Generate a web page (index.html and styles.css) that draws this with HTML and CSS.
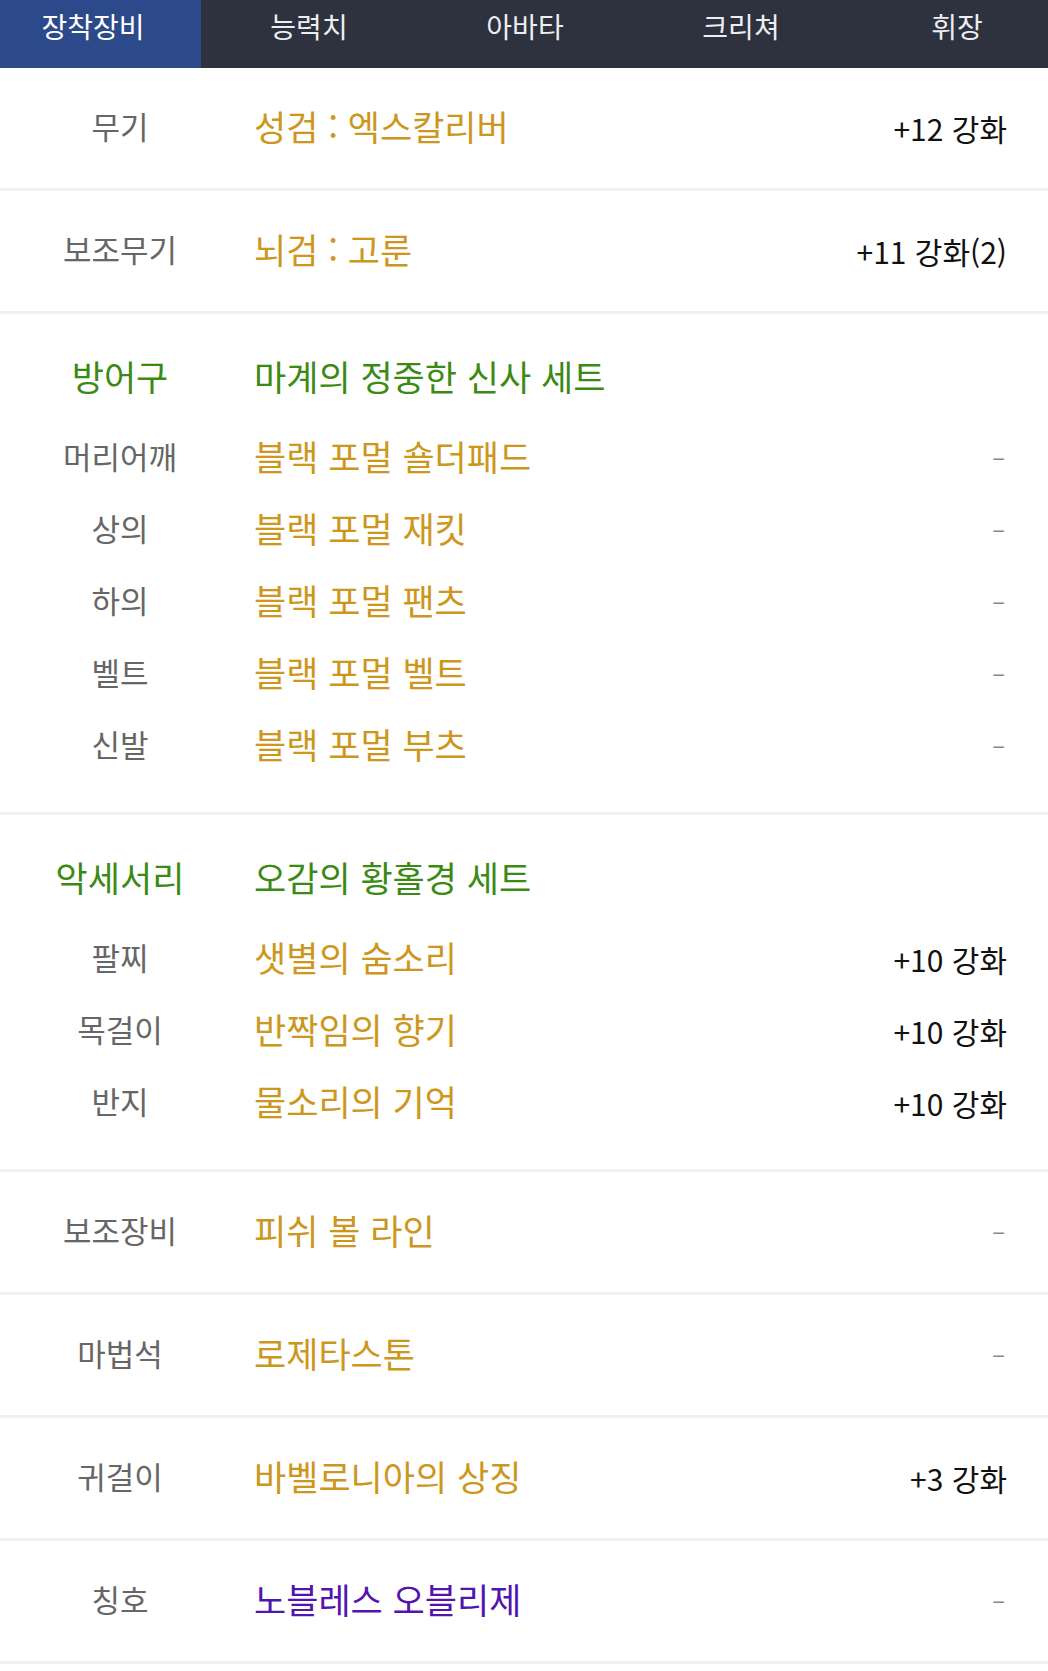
FILE: index.html
```html
<!DOCTYPE html>
<html lang="ko">
<head>
	<meta charset="UTF-8">
	<title>장착장비</title>
	<link rel="stylesheet" href="styles.css">
</head>
<body>
	<nav class="tabs">
		<ul class="tab-strip">
			<li class="tab active">장착장비</li>
			<li class="tab">능력치</li>
			<li class="tab">아바타</li>
			<li class="tab">크리쳐</li>
			<li class="tab">휘장</li>
		</ul>
	</nav>

	<div class="equip-list">
		<div class="slot">
			<div class="row">
				<span class="label">무기</span>
				<span class="name">성검 : 엑스칼리버</span>
				<span class="grade">+12 강화</span>
			</div>
		</div>

		<div class="slot">
			<div class="row">
				<span class="label">보조무기</span>
				<span class="name">뇌검 : 고룬</span>
				<span class="grade">+11 강화(2)</span>
			</div>
		</div>

		<!-- 세트 장비 -->
		<div class="slot set">
			<div class="row set-title">
				<span class="label">방어구</span>
				<span class="name">마계의 정중한 신사 세트</span>
			</div>
			<div class="row sub">
				<span class="label">머리어깨</span>
				<span class="name">블랙 포멀 숄더패드</span>
				<span class="grade none">–</span>
			</div>
			<div class="row sub">
				<span class="label">상의</span>
				<span class="name">블랙 포멀 재킷</span>
				<span class="grade none">–</span>
			</div>
			<div class="row sub">
				<span class="label">하의</span>
				<span class="name">블랙 포멀 팬츠</span>
				<span class="grade none">–</span>
			</div>
			<div class="row sub">
				<span class="label">벨트</span>
				<span class="name">블랙 포멀 벨트</span>
				<span class="grade none">–</span>
			</div>
			<div class="row sub">
				<span class="label">신발</span>
				<span class="name">블랙 포멀 부츠</span>
				<span class="grade none">–</span>
			</div>
		</div>

		<div class="slot set">
			<div class="row set-title">
				<span class="label">악세서리</span>
				<span class="name">오감의 황홀경 세트</span>
			</div>
			<div class="row sub">
				<span class="label">팔찌</span>
				<span class="name">샛별의 숨소리</span>
				<span class="grade">+10 강화</span>
			</div>
			<div class="row sub">
				<span class="label">목걸이</span>
				<span class="name">반짝임의 향기</span>
				<span class="grade">+10 강화</span>
			</div>
			<div class="row sub">
				<span class="label">반지</span>
				<span class="name">물소리의 기억</span>
				<span class="grade">+10 강화</span>
			</div>
		</div>

		<div class="slot">
			<div class="row">
				<span class="label">보조장비</span>
				<span class="name">피쉬 볼 라인</span>
				<span class="grade none">–</span>
			</div>
		</div>

		<div class="slot">
			<div class="row">
				<span class="label">마법석</span>
				<span class="name">로제타스톤</span>
				<span class="grade none">–</span>
			</div>
		</div>

		<div class="slot">
			<div class="row">
				<span class="label">귀걸이</span>
				<span class="name">바벨로니아의 상징</span>
				<span class="grade">+3 강화</span>
			</div>
		</div>

		<div class="slot">
			<div class="row">
				<span class="label">칭호</span>
				<span class="name title">노블레스 오블리제</span>
				<span class="grade none">–</span>
			</div>
		</div>
	</div>
</body>
</html>
```

FILE: styles.css
```css
body {
	margin: 0;
	padding: 0;
	background-color: #fff;
	font-family: "Noto Sans CJK KR", "Noto Sans", sans-serif;
}
ul {
	margin: 0;
	padding: 0;
	list-style: none;
}

/* 상단 탭 */
.tabs {
	height: 68px;
	overflow: hidden;
	background-color: #2d323e;
}
.tab-strip {
	display: flex;
	margin-left: -15px;
}
.tab {
	flex: none;
	width: 216px;
	height: 68px;
	box-sizing: border-box;
	padding-top: 6px;
	color: #eceef2;
	font-size: 28px;
	line-height: 40px;
	text-align: center;
}
.tab.active {
	color: #fff;
	background-color: #2c4a8a;
}

/* 장비 목록 */
.slot {
	border-bottom: 3px solid #f1f1f1;
}
.set {
	padding: 28px 0 30px;
}

.row {
	display: grid;
	grid-template-columns: 240px 1fr auto;
	column-gap: 14px;
	align-items: center;
	height: 120px;
	box-sizing: border-box;
	padding: 0 41px 6px 0;
}
.set .row {
	height: 72px;
}
.set .set-title {
	margin-bottom: 8px;
}

.label {
	color: #666;
	font-size: 31px;
	text-align: center;
}
.name {
	color: #cc971c;
	font-size: 35px;
	white-space: nowrap;
}
.name.title {
	color: #5214b0;
}
.set-title .label,
.set-title .name {
	color: #3b8a14;
	font-size: 35px;
}

.grade {
	padding-top: 5px;
	color: #111;
	font-size: 30px;
	text-align: right;
}
.grade.none {
	margin-right: 2px;
	padding-top: 0;
	color: #888;
	font-size: 24px;
}
```
